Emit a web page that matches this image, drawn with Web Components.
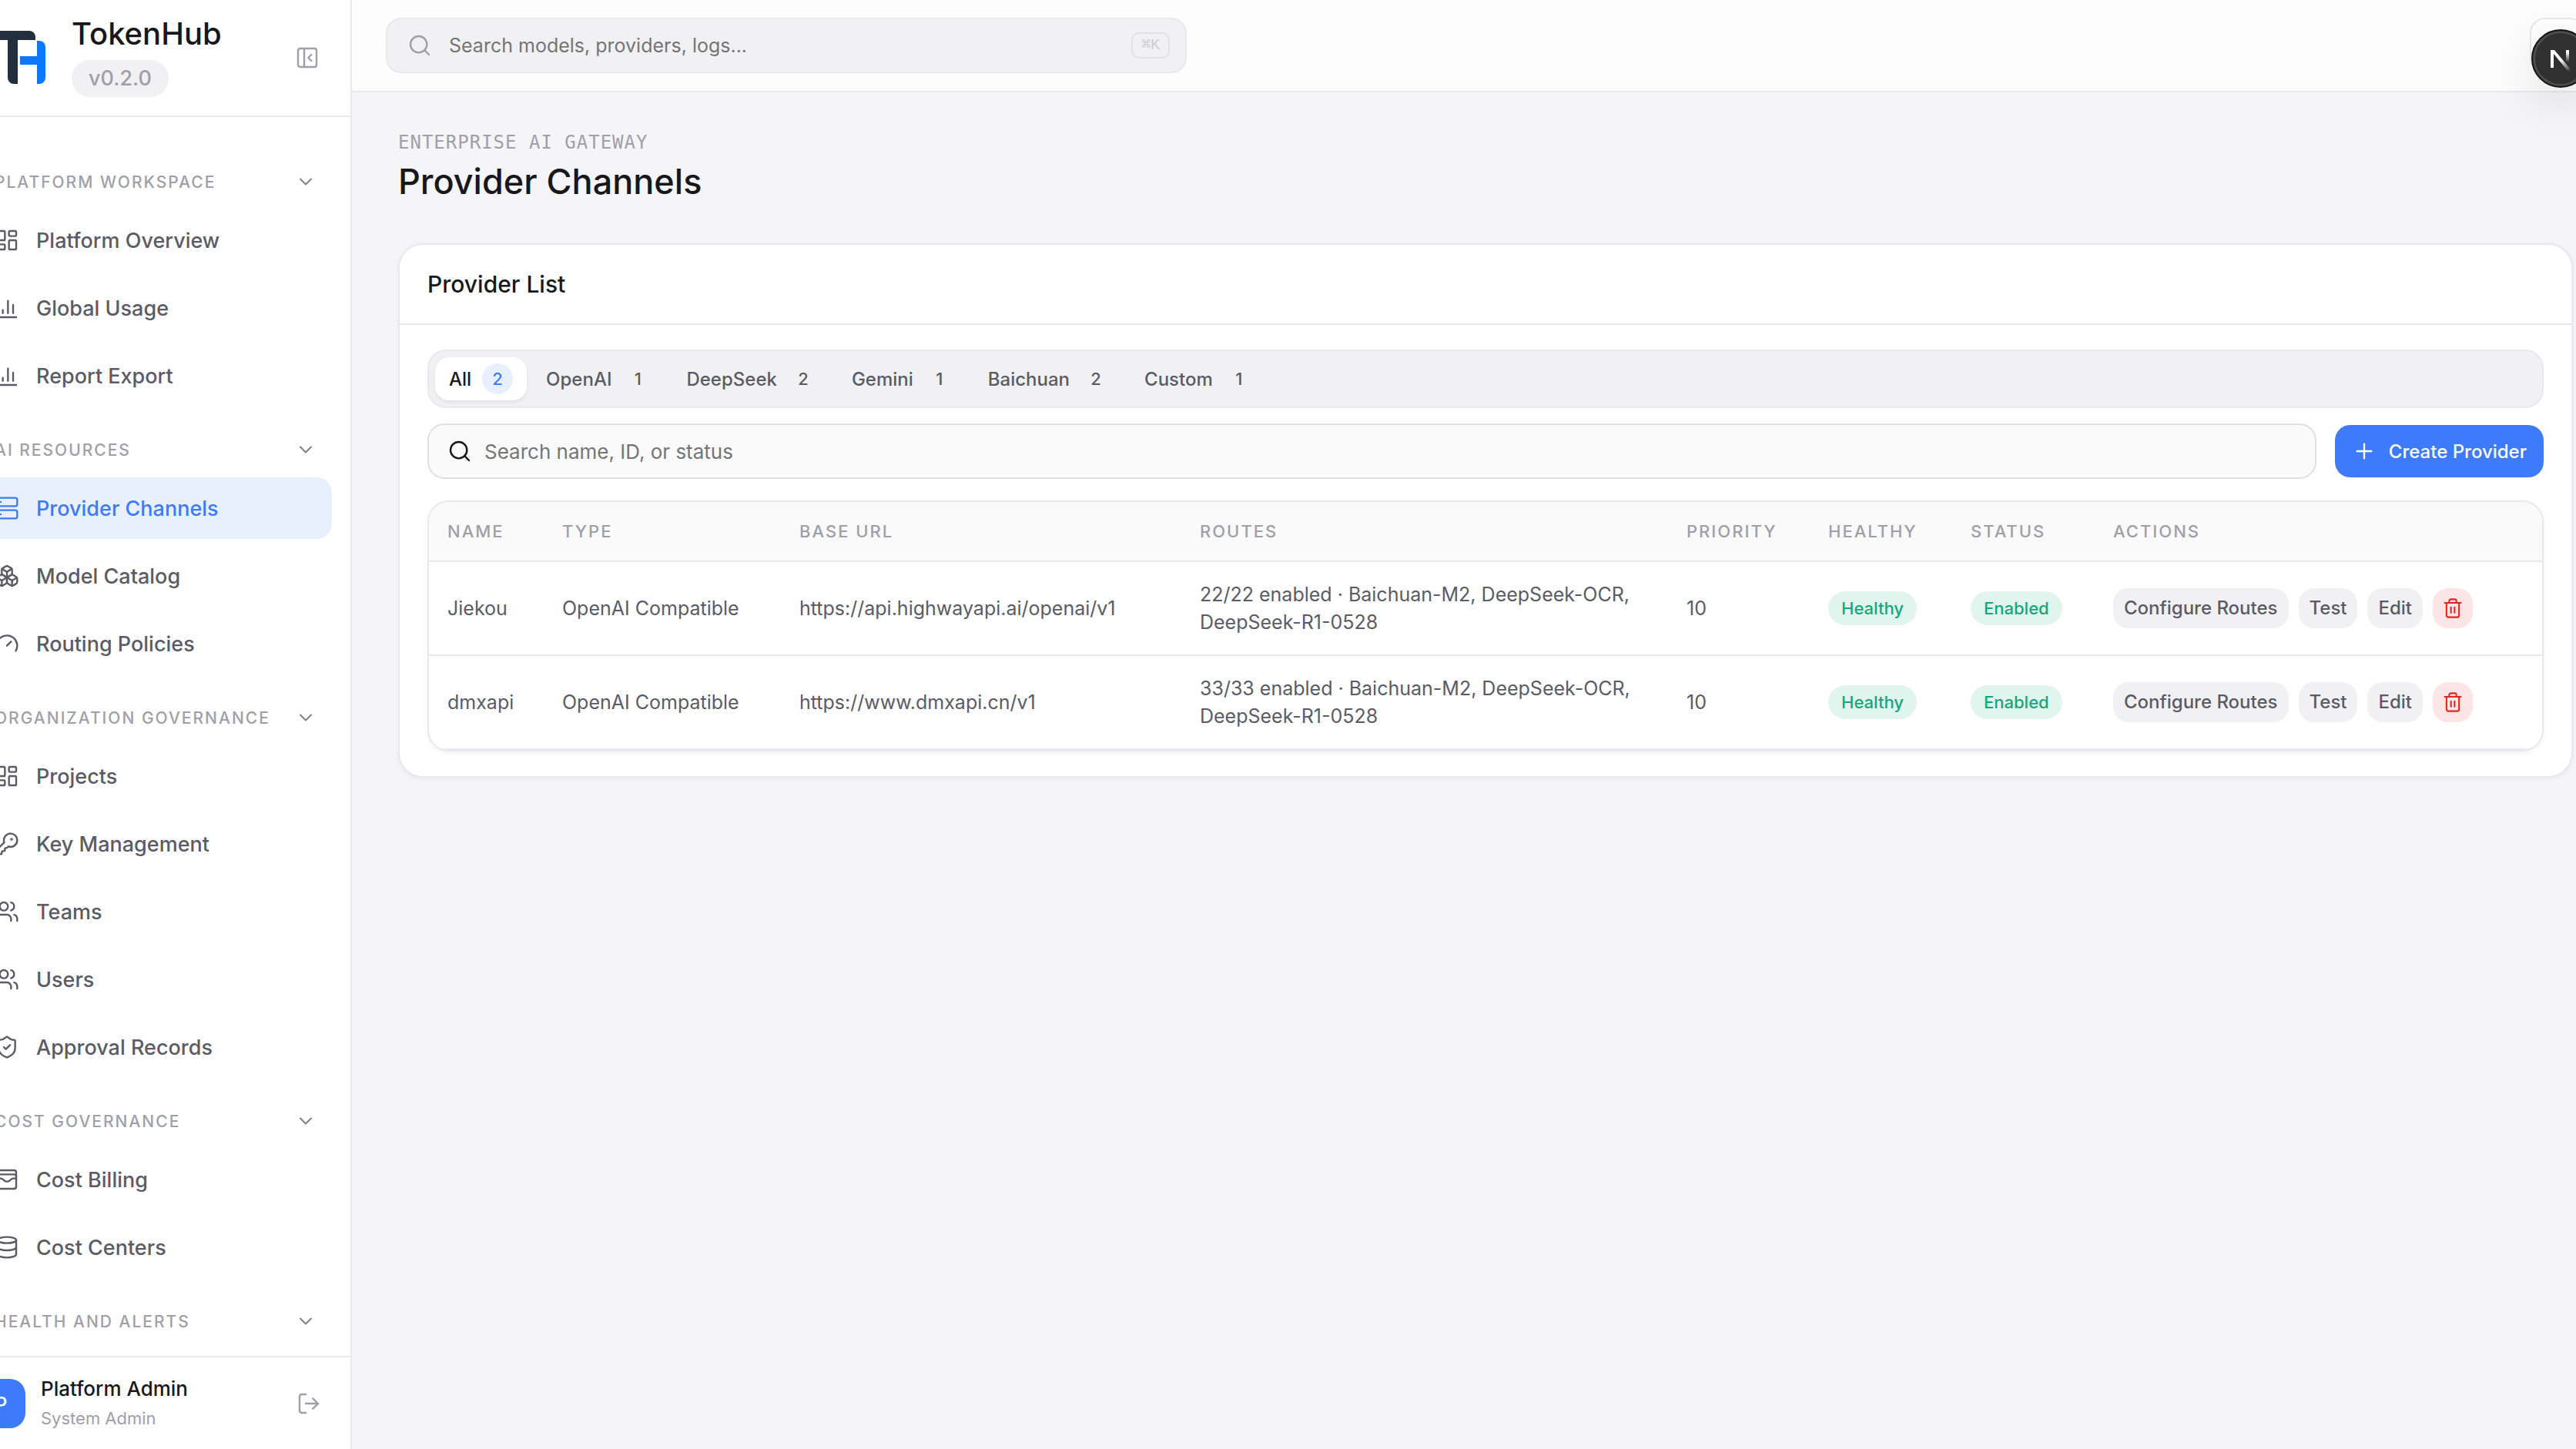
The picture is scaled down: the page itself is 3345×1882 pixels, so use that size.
<!DOCTYPE html>
<html lang="en">
<head>
<meta charset="utf-8">
<title>TokenHub</title>
<style>
  :root {
    --text: #18181b;
    --text-soft: #5b5b66;
    --text-faint: #a09fa9;
    --placeholder: #757575;
    --line: #e8e8ed;
    --line-strong: #dfdfe5;
    --bg: #f5f5f7;
    --fill: #f1f1f4;
    --surface: #fff;
    --brand: #3e7bfa;
    --brand-soft: #e8f0fe;
    --ok: #14a77b;
    --ok-soft: #e1f4ee;
    --danger: #dc2626;
    --danger-soft: #fce6e5;
    --pan: 55px;
  }

  body {
    margin: 0;
    overflow: hidden;
    background: var(--bg);
    color: var(--text);
    font-family: Inter, "Noto Sans", sans-serif;
    font-size: 26px;
  }
</style>
</head>
<body>
<app-shell>
  <side-bar slot="sidebar">
    <nav-section label="Platform Workspace">
      <nav-item icon="dashboard">Platform Overview</nav-item>
      <nav-item icon="chart">Global Usage</nav-item>
      <nav-item icon="chart">Report Export</nav-item>
    </nav-section>
    <nav-section label="AI Resources">
      <nav-item icon="server" active>Provider Channels</nav-item>
      <nav-item icon="boxes">Model Catalog</nav-item>
      <nav-item icon="gauge">Routing Policies</nav-item>
    </nav-section>
    <nav-section label="Organization Governance">
      <nav-item icon="dashboard">Projects</nav-item>
      <nav-item icon="key">Key Management</nav-item>
      <nav-item icon="users">Teams</nav-item>
      <nav-item icon="users">Users</nav-item>
      <nav-item icon="shield">Approval Records</nav-item>
    </nav-section>
    <nav-section label="Cost Governance">
      <nav-item icon="wallet">Cost Billing</nav-item>
      <nav-item icon="database">Cost Centers</nav-item>
    </nav-section>
    <nav-section label="Health and Alerts"></nav-section>
  </side-bar>
  <top-bar slot="topbar"></top-bar>
  <page-heading eyebrow="Enterprise AI Gateway">Provider Channels</page-heading>
  <panel-card heading="Provider List">
    <filter-tabs></filter-tabs>
    <list-toolbar></list-toolbar>
    <provider-table></provider-table>
  </panel-card>
</app-shell>
<dev-badge></dev-badge>

<script>
const ICONS = {
  dashboard: `<rect width="7" height="9" x="3" y="3" rx="1"/><rect width="7" height="5" x="14" y="3" rx="1"/><rect width="7" height="9" x="14" y="12" rx="1"/><rect width="7" height="5" x="3" y="16" rx="1"/>`,
  chart: `<path d="M3 3v16a2 2 0 0 0 2 2h16"/><path d="M18 17V9"/><path d="M13 17V5"/><path d="M8 17v-3"/>`,
  server: `<rect width="20" height="8" x="2" y="2" rx="2"/><rect width="20" height="8" x="2" y="14" rx="2"/><path d="M6 6h.01"/><path d="M6 18h.01"/>`,
  boxes: `<path d="M2.97 12.92A2 2 0 0 0 2 14.63v3.24a2 2 0 0 0 .97 1.71l3 1.8a2 2 0 0 0 2.06 0L12 19v-5.5l-5-3-4.03 2.42Z"/><path d="m7 16.5-4.74-2.85"/><path d="m7 16.5 5-3"/><path d="M7 16.5v5.17"/><path d="M12 13.5V19l3.97 2.38a2 2 0 0 0 2.06 0l3-1.8a2 2 0 0 0 .97-1.71v-3.24a2 2 0 0 0-.97-1.71L17 10.5l-5 3Z"/><path d="m17 16.5-5-3"/><path d="m17 16.5 4.74-2.85"/><path d="M17 16.5v5.17"/><path d="M7.97 4.42A2 2 0 0 0 7 6.13v4.37l5 3 5-3V6.13a2 2 0 0 0-.97-1.71l-3-1.8a2 2 0 0 0-2.06 0l-3 1.8Z"/><path d="M12 8 7.26 5.15"/><path d="m12 8 4.74-2.85"/><path d="M12 13.5V8"/>`,
  gauge: `<path d="m12 14 4-4"/><path d="M3.34 19a10 10 0 1 1 17.32 0"/>`,
  key: `<path d="M2.586 17.414A2 2 0 0 0 2 18.828V21a1 1 0 0 0 1 1h3a1 1 0 0 0 1-1v-1a1 1 0 0 1 1-1h1a1 1 0 0 0 1-1v-1a1 1 0 0 1 1-1h.172a2 2 0 0 0 1.414-.586l.814-.814a6.5 6.5 0 1 0-4-4z"/><circle cx="16.5" cy="7.5" r=".5" fill="currentColor"/>`,
  users: `<path d="M16 21v-2a4 4 0 0 0-4-4H6a4 4 0 0 0-4 4v2"/><circle cx="9" cy="7" r="4"/><path d="M22 21v-2a4 4 0 0 0-3-3.87"/><path d="M16 3.13a4 4 0 0 1 0 7.75"/>`,
  shield: `<path d="M20 13c0 5-3.5 7.5-7.66 8.95a1 1 0 0 1-.67-.01C7.5 20.5 4 18 4 13V6a1 1 0 0 1 1-1c2 0 4.5-1.2 6.24-2.72a1.17 1.17 0 0 1 1.52 0C14.51 3.81 17 5 19 5a1 1 0 0 1 1 1z"/><path d="m9 12 2 2 4-4"/>`,
  wallet: `<rect width="18" height="18" x="3" y="3" rx="2"/><path d="M3 9a2 2 0 0 1 2-2h14a2 2 0 0 1 2 2"/><path d="M3 11h3c.8 0 1.6.3 2.1.9l1.1.9c1.6 1.6 4.1 1.6 5.7 0l1.1-.9c.5-.5 1.3-.9 2.1-.9H21"/>`,
  database: `<ellipse cx="12" cy="5" rx="9" ry="3"/><path d="M3 5V19A9 3 0 0 0 21 19V5"/><path d="M3 12A9 3 0 0 0 21 12"/>`,
  panel: `<rect width="18" height="18" x="3" y="3" rx="2"/><path d="M9 3v18"/><path d="m16 15-3-3 3-3"/>`,
  chevron: `<path d="m6 9 6 6 6-6"/>`,
  logout: `<path d="m16 17 5-5-5-5"/><path d="M21 12H9"/><path d="M9 21H5a2 2 0 0 1-2-2V5a2 2 0 0 1 2-2h4"/>`,
  search: `<circle cx="11" cy="11" r="8"/><path d="m21 21-4.34-4.34"/>`,
  plus: `<path d="M5 12h14"/><path d="M12 5v14"/>`,
  trash: `<path d="M3 6h18"/><path d="M19 6v14a2 2 0 0 1-2 2H7a2 2 0 0 1-2-2V6"/><path d="M8 6V4a2 2 0 0 1 2-2h4a2 2 0 0 1 2 2v2"/><path d="M10 11v6"/><path d="M14 11v6"/>`,
};

const RESET = /* css */`
  :host, * { box-sizing: border-box; }
  button, input { font: inherit; color: inherit; border: 0; margin: 0; padding: 0; background: none; }
  h1, h2, p { margin: 0; padding: 0; font: inherit; }
`;

class BaseElement extends HTMLElement {
  constructor() {
    super();
    this.attachShadow({ mode: "open" });
  }

  connectedCallback() {
    this.shadowRoot.innerHTML = `<style>${RESET}${this.constructor.styles}</style>${this.template()}`;
  }
}

class UiIcon extends BaseElement {
  static get styles() {
    return /* css */`
      :host {
        display: block;
        flex: none;
        width: var(--icon-size, 32px);
        height: var(--icon-size, 32px);
      }
      svg { display: block; width: 100%; height: 100%; }
    `;
  }

  template() {
    return /* html */`
    <svg viewBox="0 0 24 24" fill="none" stroke="currentColor" stroke-width="1.8"
      stroke-linecap="round" stroke-linejoin="round" aria-hidden="true">${ICONS[this.getAttribute("name")]}</svg>`;
  }
}

class AppShell extends BaseElement {
  static get styles() {
    return /* css */`
      :host {
        display: grid;
        grid-template-columns: 512px minmax(0, 1fr);
        height: calc(100vh + 1px);
        margin: 0 calc(-1px - var(--pan)) 0 calc(-1 * var(--pan));
      }
      .content {
        display: flex;
        flex-direction: column;
        min-width: 0;
      }
      main { padding: 48px 60px; }
    `;
  }

  template() {
    return /* html */`
    <slot name="sidebar"></slot>
    <div class="content">
      <slot name="topbar"></slot>
      <main><slot></slot></main>
    </div>`;
  }
}

class SideBar extends BaseElement {
  static get styles() {
    return /* css */`
      :host {
        display: flex;
        flex-direction: column;
        min-height: 0;
        background: var(--surface);
        border-right: 2px solid var(--line);
      }
      header {
        display: flex;
        align-items: center;
        padding: 24px 40px 24px 24px;
        border-bottom: 2px solid var(--line);
      }
      .logo { flex: none; width: 96px; height: 96px; margin-right: 28px; }
      .brand {
        flex: 1;
        display: flex;
        flex-direction: column;
        align-items: flex-start;
        gap: 14px;
      }
      .name { font-size: 40px; line-height: 40px; font-weight: 500; }
      .version {
        padding: 0 22px;
        border-radius: 24px;
        background: var(--fill);
        color: var(--text-faint);
        font-size: 27px;
        line-height: 48px;
        font-weight: 500;
      }
      header button, footer button { color: var(--text-faint); }
      nav {
        flex: 1;
        min-height: 0;
        overflow: hidden;
        display: flex;
        flex-direction: column;
        gap: 28px;
        padding: 56px 24px 0;
      }
      footer {
        display: flex;
        align-items: center;
        gap: 20px;
        padding: 22px 38px 22px 24px;
        border-top: 2px solid var(--line);
      }
      .avatar {
        display: grid;
        place-items: center;
        width: 64px;
        height: 64px;
        border-radius: 20px;
        background: var(--brand);
        color: #fff;
        font-weight: 500;
      }
      .user { flex: 1; }
      .user p { line-height: 38px; font-weight: 500; }
      .user .role { font-size: 22px; font-weight: 400; color: var(--text-faint); }
    `;
  }

  template() {
    return /* html */`
    <header>
      <svg class="logo" viewBox="0 0 96 96" aria-hidden="true">
        <path fill="#22303d" d="M26 13H69a8 8 0 0 1 8 8V25H54V82H49a8 8 0 0 1-8-8V25H18V21a8 8 0 0 1 8-8Z"/>
        <path fill="#0a78ff" d="M79 26H82a8 8 0 0 1 8 8V74a8 8 0 0 1-8 8H79V57H57V46H79Z"/>
      </svg>
      <div class="brand">
        <p class="name">TokenHub</p>
        <span class="version">v0.2.0</span>
      </div>
      <button type="button" aria-label="Collapse sidebar"><ui-icon name="panel"></ui-icon></button>
    </header>
    <nav><slot></slot></nav>
    <footer>
      <span class="avatar">P</span>
      <div class="user">
        <p>Platform Admin</p>
        <p class="role">System Admin</p>
      </div>
      <button type="button" aria-label="Sign out"><ui-icon name="logout"></ui-icon></button>
    </footer>`;
  }
}

class NavSection extends BaseElement {
  static get styles() {
    return /* css */`
      :host {
        display: flex;
        flex-direction: column;
        gap: 8px;
        flex: none;
      }
      button {
        display: flex;
        align-items: center;
        justify-content: space-between;
        width: 100%;
        height: 56px;
        padding: 0 20px 0 24px;
        font-size: 21px;
        font-weight: 500;
        letter-spacing: 2px;
        text-transform: uppercase;
        text-align: left;
        white-space: nowrap;
        color: var(--text-faint);
      }
      ui-icon { --icon-size: 28px; color: #808085; }
    `;
  }

  template() {
    return /* html */`
    <button type="button" aria-expanded="true">${this.getAttribute("label")}<ui-icon name="chevron"></ui-icon></button>
    <slot></slot>`;
  }
}

class NavItem extends BaseElement {
  static get styles() {
    return /* css */`
      :host { display: block; }
      a {
        display: flex;
        align-items: center;
        gap: 22px;
        height: 80px;
        padding: 0 24px;
        border-radius: 20px;
        color: var(--text-soft);
        font-size: 27px;
        font-weight: 500;
        text-decoration: none;
      }
      :host([active]) a {
        background: var(--brand-soft);
        color: var(--brand);
      }
    `;
  }

  template() {
    return /* html */`<a href="#"><ui-icon name="${this.getAttribute("icon")}"></ui-icon><slot></slot></a>`;
  }
}

class TopBar extends BaseElement {
  static get styles() {
    return /* css */`
      :host {
        display: flex;
        align-items: center;
        justify-content: space-between;
        height: 120px;
        padding: 0 44px;
        background: #fdfdfe;
        border-bottom: 2px solid var(--line);
      }
      label {
        display: flex;
        align-items: center;
        gap: 22px;
        width: 1040px;
        height: 72px;
        padding: 0 20px 0 26px;
        border: 2px solid var(--line);
        border-radius: 20px;
        background: var(--fill);
        color: var(--text-faint);
      }
      input { flex: 1; min-width: 0; outline: 0; font-size: 25px; }
      input::placeholder { color: var(--placeholder); opacity: 1; }
      kbd {
        padding: 0 11px;
        border: 2px solid #e2e2e6;
        border-radius: 10px;
        font: 20px/30px "Liberation Mono", "DejaVu Sans Mono", monospace;
        color: #cdcdd3;
      }
      .account {
        width: 72px;
        height: 72px;
        border: 2px solid var(--line);
        border-radius: 20px;
        background: var(--surface);
      }
    `;
  }

  template() {
    return /* html */`
    <label>
      <ui-icon name="search"></ui-icon>
      <input type="search" aria-label="Search" placeholder="Search models, providers, logs...">
      <kbd>⌘K</kbd>
    </label>
    <button class="account" type="button" aria-label="Account"></button>`;
  }
}

class PageHeading extends BaseElement {
  static get styles() {
    return /* css */`
      :host { display: block; margin-bottom: 52px; }
      p {
        margin-bottom: 6px;
        font: 24px/34px "DejaVu Sans Mono", monospace;
        letter-spacing: 1px;
        text-transform: uppercase;
        color: var(--text-faint);
      }
      h1 { font-size: 45px; line-height: 56px; font-weight: 500; }
    `;
  }

  template() {
    return /* html */`
    <p>${this.getAttribute("eyebrow")}</p>
    <h1><slot></slot></h1>`;
  }
}

class PanelCard extends BaseElement {
  static get styles() {
    return /* css */`
      :host {
        display: block;
        border: 2px solid var(--line);
        border-radius: 32px;
        background: var(--surface);
        box-shadow: 0 2px 6px rgb(0 0 0 / 5%);
      }
      h2 {
        padding: 0 36px;
        border-bottom: 2px solid var(--line);
        font-size: 30px;
        line-height: 102px;
        font-weight: 500;
      }
      .body { padding: 32px 36px; }
    `;
  }

  template() {
    return /* html */`
    <h2>${this.getAttribute("heading")}</h2>
    <div class="body"><slot></slot></div>`;
  }
}

class FilterTabs extends BaseElement {
  static get styles() {
    return /* css */`
      :host {
        display: flex;
        gap: 7px;
        padding: 8px;
        margin-bottom: 20px;
        border: 2px solid var(--line);
        border-radius: 24px;
        background: var(--fill);
      }
      button {
        display: flex;
        align-items: center;
        gap: 14px;
        height: 56px;
        padding: 0 18px;
        border-radius: 18px;
        font-size: 24px;
        font-weight: 500;
        color: var(--text-soft);
      }
      .count {
        width: 40px;
        border-radius: 20px;
        font-size: 22px;
        line-height: 40px;
        text-align: center;
      }
      [aria-pressed="true"] {
        background: var(--surface);
        color: var(--text);
        box-shadow: 0 2px 4px rgb(0 0 0 / 8%);
      }
      [aria-pressed="true"] .count { background: var(--brand-soft); color: var(--brand); }
    `;
  }

  template() {
    const tabs = [["All", 2], ["OpenAI", 1], ["DeepSeek", 2], ["Gemini", 1], ["Baichuan", 2], ["Custom", 1]];
    return tabs.map(([name, count], i) => /* html */`
    <button type="button" aria-pressed="${i === 0}">${name}<span class="count">${count}</span></button>`).join("");
  }
}

class ListToolbar extends BaseElement {
  static get styles() {
    return /* css */`
      :host {
        display: flex;
        align-items: center;
        gap: 24px;
        margin-bottom: 28px;
      }
      label {
        flex: 1;
        display: flex;
        align-items: center;
        gap: 16px;
        height: 72px;
        padding: 0 24px;
        border: 2px solid var(--line-strong);
        border-radius: 22px;
        background: #fafafa;
      }
      input { flex: 1; min-width: 0; outline: 0; }
      input::placeholder { color: var(--placeholder); opacity: 1; }
      button {
        display: flex;
        align-items: center;
        gap: 16px;
        height: 68px;
        padding: 0 22px;
        border-radius: 20px;
        background: var(--brand);
        color: #fff;
        font-size: 24px;
        font-weight: 500;
      }
    `;
  }

  template() {
    return /* html */`
    <label>
      <ui-icon name="search"></ui-icon>
      <input type="search" aria-label="Search providers" placeholder="Search name, ID, or status">
    </label>
    <button type="button"><ui-icon name="plus"></ui-icon>Create Provider</button>`;
  }
}

class StatusBadge extends BaseElement {
  static get styles() {
    return /* css */`
      :host {
        display: inline-block;
        vertical-align: middle;
        padding: 0 17px;
        border-radius: 22px;
        background: var(--ok-soft);
        color: var(--ok);
        font-size: 22px;
        line-height: 44px;
        font-weight: 500;
      }
    `;
  }

  template() {
    return `<slot></slot>`;
  }
}

class ProviderTable extends BaseElement {
  static get styles() {
    return /* css */`
      :host {
        display: block;
        overflow: hidden;
        border: 2px solid var(--line);
        border-radius: 28px;
        box-shadow: 0 2px 6px rgb(0 0 0 / 6%);
      }
      table {
        width: 100%;
        table-layout: fixed;
        border-collapse: separate;
        border-spacing: 0;
      }
      th, td {
        padding: 0 24px;
        border-bottom: 2px solid var(--line);
        text-align: left;
        vertical-align: middle;
        white-space: nowrap;
      }
      th {
        height: 78px;
        background: #fafafa;
        color: var(--text-faint);
        font-size: 22px;
        font-weight: 500;
        letter-spacing: 2px;
        text-transform: uppercase;
      }
      td {
        height: 122px;
        color: var(--text-soft);
        font-size: 25px;
        line-height: 36px;
      }
      .actions { display: flex; gap: 13px; }
      button {
        height: 52px;
        padding: 0 14px;
        border-radius: 20px;
        background: var(--fill);
        font-size: 24px;
        font-weight: 500;
      }
      .remove {
        --icon-size: 28px;
        padding: 0 12px;
        background: var(--danger-soft);
        color: var(--danger);
      }
    `;
  }

  template() {
    const columns = [["Name", 149], ["Type", 308], ["Base URL", 520], ["Routes", 632],
      ["Priority", 184], ["Healthy", 185], ["Status", 185], ["Actions"]];
    const rows = [
      ["Jiekou", "https://api.highwayapi.ai/openai/v1", "22/22"],
      ["dmxapi", "https://www.dmxapi.cn/v1", "33/33"],
    ];
    return /* html */`
    <table>
      <colgroup>${columns.map(([, width]) => `<col${width ? ` style="width:${width}px"` : ""}>`).join("")}</colgroup>
      <thead><tr>${columns.map(([name]) => `<th scope="col">${name}</th>`).join("")}</tr></thead>
      <tbody>${rows.map(([name, url, routes]) => /* html */`
        <tr>
          <td>${name}</td>
          <td>OpenAI Compatible</td>
          <td>${url}</td>
          <td>${routes} enabled · Baichuan-M2, DeepSeek-OCR,<br>DeepSeek-R1-0528</td>
          <td>10</td>
          <td><status-badge>Healthy</status-badge></td>
          <td><status-badge>Enabled</status-badge></td>
          <td>
            <div class="actions">
              <button type="button">Configure Routes</button>
              <button type="button">Test</button>
              <button type="button">Edit</button>
              <button class="remove" type="button" aria-label="Delete ${name}"><ui-icon name="trash"></ui-icon></button>
            </div>
          </td>
        </tr>`).join("")}
      </tbody>
    </table>`;
  }
}

// floating badge, sits over the page and hangs off the right edge
class DevBadge extends BaseElement {
  static get styles() {
    return /* css */`
      :host { position: fixed; top: 38px; right: -18px; }
      button {
        display: block;
        width: 76px;
        height: 76px;
        border: 2px solid #151515;
        border-radius: 50%;
        background: #303030;
        box-shadow: inset 0 0 0 3px #4c4c4c, 0 16px 64px rgb(0 0 0 / 12%);
      }
      svg { display: block; width: 72px; height: 72px; }
    `;
  }

  template() {
    return /* html */`
    <button type="button" aria-label="Developer tools">
      <svg viewBox="0 0 72 72" aria-hidden="true">
        <defs>
          <linearGradient id="slope" gradientUnits="userSpaceOnUse" x1="36" y1="38" x2="48" y2="53">
            <stop stop-color="#fff"/><stop offset="1" stop-color="#fff" stop-opacity="0"/>
          </linearGradient>
          <linearGradient id="post" x1="0" y1="0" x2="0" y2="1">
            <stop offset=".2" stop-color="#fff"/><stop offset="1" stop-color="#fff" stop-opacity="0"/>
          </linearGradient>
        </defs>
        <rect x="23" y="25" width="4" height="23" fill="#fff"/>
        <polygon points="23,25 28,25 49,50 46,53" fill="url(#slope)"/>
        <rect x="43" y="25" width="4" height="16" fill="url(#post)"/>
      </svg>
    </button>`;
  }
}

customElements.define("ui-icon", UiIcon);
customElements.define("app-shell", AppShell);
customElements.define("side-bar", SideBar);
customElements.define("nav-section", NavSection);
customElements.define("nav-item", NavItem);
customElements.define("top-bar", TopBar);
customElements.define("page-heading", PageHeading);
customElements.define("panel-card", PanelCard);
customElements.define("filter-tabs", FilterTabs);
customElements.define("list-toolbar", ListToolbar);
customElements.define("status-badge", StatusBadge);
customElements.define("provider-table", ProviderTable);
customElements.define("dev-badge", DevBadge);
</script>
</body>
</html>
